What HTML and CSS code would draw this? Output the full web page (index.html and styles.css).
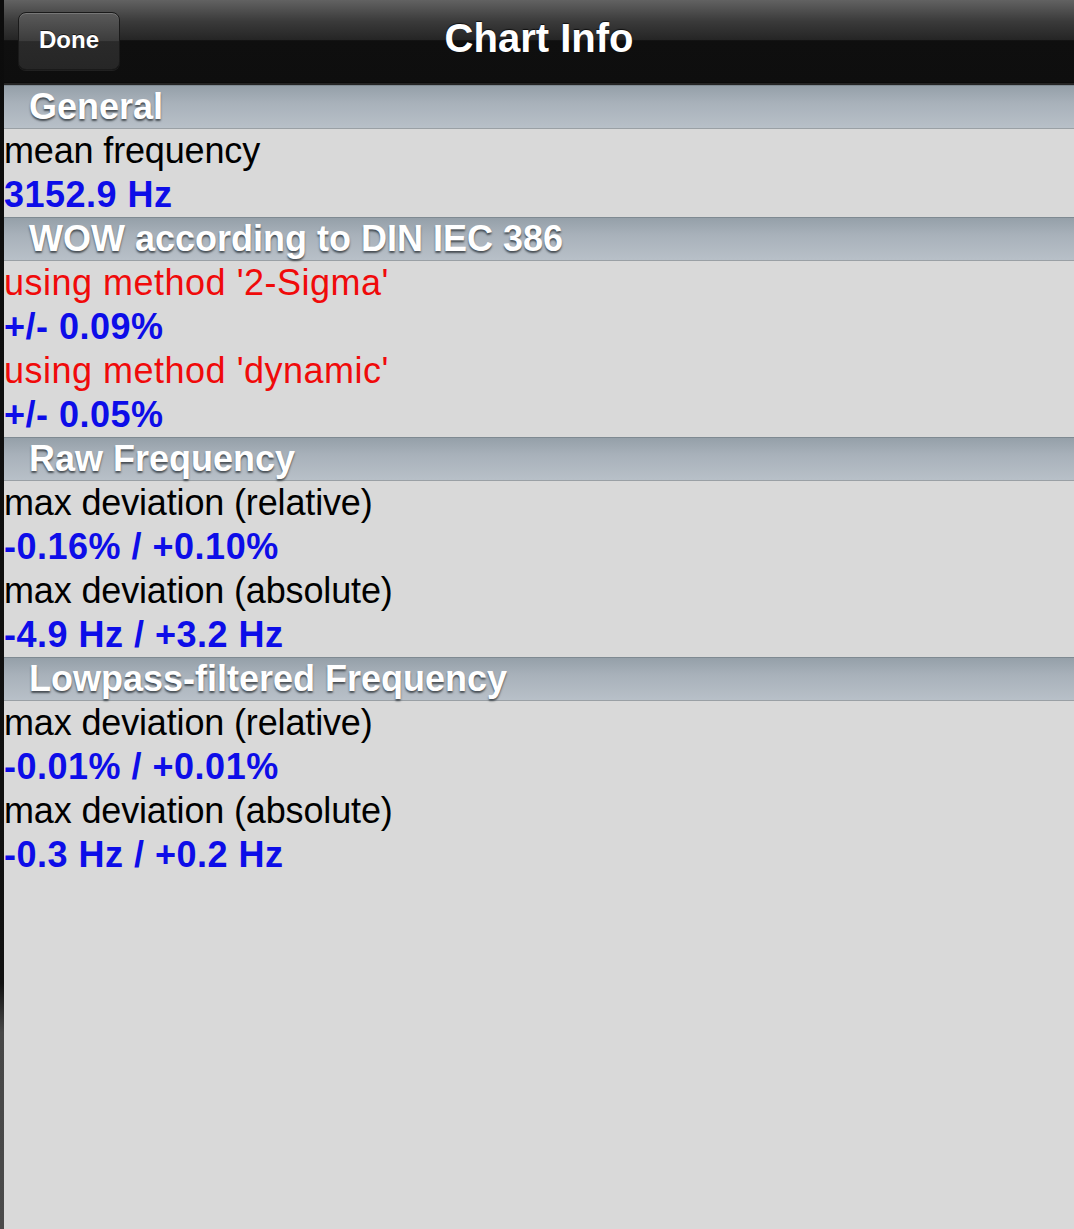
FILE: index.html
```html
<!DOCTYPE html>
<html lang="en">
<head>
  <meta charset="UTF-8" />
  <meta name="viewport" content="width=device-width, initial-scale=1" />
  <title>Chart Info</title>
  <link rel="stylesheet" href="styles.css">
</head>
<body>
  <div class="panel">
    <header class="navbar">
      <button class="done-btn">Done</button>
      <h1>Chart Info</h1>
    </header>
    <main class="info-list">
      <h2 class="section-head">General</h2>
      <div class="row label">mean frequency</div>
      <div class="row value">3152.9 Hz</div>

      <h2 class="section-head">WOW according to DIN IEC 386</h2>
      <div class="row method">using method '2-Sigma'</div>
      <div class="row value">+/- 0.09%</div>
      <div class="row method">using method 'dynamic'</div>
      <div class="row value">+/- 0.05%</div>

      <h2 class="section-head">Raw Frequency</h2>
      <div class="row label">max deviation (relative)</div>
      <div class="row value">-0.16% / +0.10%</div>
      <div class="row label">max deviation (absolute)</div>
      <div class="row value">-4.9 Hz / +3.2 Hz</div>

      <h2 class="section-head">Lowpass-filtered Frequency</h2>
      <div class="row label">max deviation (relative)</div>
      <div class="row value">-0.01% / +0.01%</div>
      <div class="row label">max deviation (absolute)</div>
      <div class="row value">-0.3 Hz / +0.2 Hz</div>
    </main>
  </div>
</body>
</html>
```

FILE: styles.css
```css
* {
  margin: 0;
  padding: 0;
  box-sizing: border-box;
}

body {
  font-family: "Liberation Sans", Arial, sans-serif;
  min-height: 100vh;
  padding-left: 4px;
  background: linear-gradient(180deg, #0c0c0c 0%, #111 80%, #474747 84%, #4a4a4a 100%);
}

.panel {
  min-height: 100vh;
  background: #d9d9d9;
  display: flex;
  flex-direction: column;
}

/* barra de navegação */
.navbar {
  position: relative;
  height: 85px;
  display: flex;
  align-items: center;
  justify-content: center;
  background: linear-gradient(180deg, #626262 0%, #3a3a3a 26%, #252525 48%, #0f0f0f 49%, #0e0e0e 100%);
  border-bottom: 2px solid #242424;
  box-shadow: inset 0 -1px 0 #0a0a0a;
}

.navbar h1 {
  color: #fff;
  font-size: 40px;
  font-weight: bold;
  text-shadow: 0 -1px 1px rgba(0, 0, 0, 0.7);
  margin-top: -6px;
}

.done-btn {
  position: absolute;
  left: 14px;
  top: 12px;
  width: 102px;
  height: 58px;
  border-radius: 8px;
  border: 1px solid #1a1a1a;
  background: linear-gradient(180deg, #5a5a5a 0%, #3c3c3c 50%, #2a2a2a 51%, #262626 100%);
  box-shadow: inset 0 1px 0 rgba(255, 255, 255, 0.18), 0 1px 0 rgba(255, 255, 255, 0.08);
  color: #fff;
  font-family: inherit;
  font-size: 24px;
  font-weight: bold;
  padding-bottom: 2px;
  text-shadow: 0 -1px 0 rgba(0, 0, 0, 0.6);
}

/* lista */
.info-list {
  display: flex;
  flex-direction: column;
}

.section-head {
  height: 44px;
  line-height: 41px;
  padding-left: 25px;
  font-size: 36px;
  font-weight: bold;
  color: #fff;
  text-shadow: 0 2px 2px rgba(60, 66, 72, 0.9);
  background: linear-gradient(180deg, #95a0a9 0%, #a8b1ba 40%, #b8c0c8 100%);
  border-top: 1px solid #7f8a92;
  border-bottom: 1px solid #9aa0a5;
}

.row {
  height: 44px;
  line-height: 44px;
  font-size: 36px;
  white-space: nowrap;
}

.label {
  color: #000;
  letter-spacing: -0.15px;
}

.method {
  color: #f00a0a;
  letter-spacing: 0.5px;
}

.value {
  color: #0d0de8;
  font-weight: bold;
  letter-spacing: 0.5px;
}
```
